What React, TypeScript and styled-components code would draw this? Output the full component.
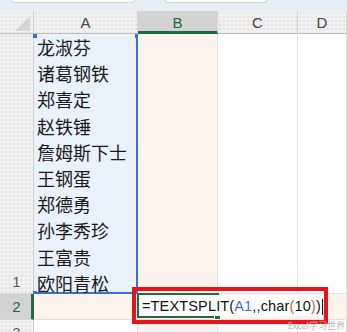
import React from "react";
import styled, { createGlobalStyle, css } from "styled-components";

const Global = createGlobalStyle`
  html, body { margin: 0; padding: 0; background: #ffffff; }
  body { width: 347px; height: 332px; overflow: hidden; font-family: "Liberation Sans", Arial, sans-serif; }
`;

const Page = styled.div`
  position: relative;
  width: 347px;
  height: 332px;
  overflow: hidden;
  display: flex;
  flex-direction: column;
  background: #ffffff;
`;

const TopStrip = styled.div`
  height: 11px;
  flex: none;
  background: #e7edf0;
  display: flex;
  align-items: flex-start;
`;

const Tab = styled.div<{ $left: number; $width: number }>`
  margin-left: ${(p) => p.$left}px;
  width: ${(p) => p.$width}px;
  height: 2px;
  background: #ffffff;
  border: 1px solid #cdd4d8;
  border-top: none;
  border-radius: 0 0 5px 5px;
`;

const Sheet = styled.div`
  flex: 1;
  display: grid;
  grid-template-columns: 34px 104px 80px 80px 1fr;
  grid-template-rows: 23px 260px 26px 1fr;
`;

const headerBg = css`
  background-color: #f1f1f1;
  background-image: radial-gradient(#e3e3e3 0.7px, transparent 0.8px);
  background-size: 4px 4px;
`;

const Corner = styled.div`
  ${headerBg};
  box-sizing: border-box;
  border-right: 1px solid #cfcfcf;
  border-bottom: 1px solid #bfbfbf;
  display: flex;
  align-items: flex-end;
  justify-content: flex-end;
  padding: 0 3px 2px 0;
`;

const Triangle = styled.div`
  width: 0;
  height: 0;
  border-left: 15px solid transparent;
  border-bottom: 15px solid #d6d6d6;
`;

const ColHeader = styled.div<{ $active?: boolean }>`
  ${headerBg};
  ${(p) => p.$active && css`background: #d3d3d3;`}
  box-sizing: border-box;
  border-right: 1px solid #d4d4d4;
  border-bottom: ${(p) => (p.$active ? "3px solid #1d6b3e" : "1px solid #bfbfbf")};
  display: flex;
  align-items: center;
  justify-content: center;
  padding-top: ${(p) => (p.$active ? 3 : 1)}px;
  font-size: 15px;
  color: ${(p) => (p.$active ? "#146c3c" : "#444444")};
`;

const RowHeader = styled.div<{ $active?: boolean }>`
  ${headerBg};
  ${(p) => p.$active && css`background: #d3d3d3;`}
  box-sizing: border-box;
  border-right: ${(p) => (p.$active ? "3px solid #1d6b3e" : "1px solid #cfcfcf")};
  border-bottom: 1px solid #d8d8d8;
  display: flex;
  align-items: flex-end;
  justify-content: center;
  padding-bottom: ${(p) => (p.$active ? 3 : 2)}px;
  padding-left: ${(p) => (p.$active ? 2 : 0)}px;
  font-size: 15px;
  line-height: 18px;
  color: ${(p) => (p.$active ? "#146c3c" : "#5a5a5a")};
`;

const PartialRowHeader = styled(RowHeader)`
  align-items: flex-start;
  padding-top: 5px;
  padding-bottom: 0;
  line-height: 15px;
  overflow: hidden;
`;

type Tone = "plain" | "focus";

const Cell = styled.div<{ $tone?: Tone }>`
  box-sizing: border-box;
  position: relative;
  background: ${(p) => (p.$tone === "focus" ? "#fdf4ee" : "#ffffff")};
  border-right: 1px solid #e0e0e0;
  border-bottom: 1px solid #e0e0e0;
`;

const RangeCell = styled.div`
  box-sizing: border-box;
  position: relative;
  background: #e9f1fb;
  border-right: 2px solid #3d6fd0;
  border-bottom: 2px solid #3d6fd0;
  padding-left: 3px;
`;

const Handle = styled.div<{ $pos: "tl" | "tr" | "bl" | "br" }>`
  position: absolute;
  width: 4px;
  height: 4px;
  background: #3d6fd0;
  ${(p) => (p.$pos === "tl" || p.$pos === "tr" ? "top: 0;" : "bottom: -3px;")}
  ${(p) => (p.$pos === "tl" || p.$pos === "bl" ? "left: -1px;" : "right: -3px;")}
`;

const Names = styled.div`
  font-family: "Noto Sans CJK SC", "Noto Sans CJK JP", sans-serif;
  font-size: 18px;
  line-height: 26.2px;
  color: #1b1b1b;
  white-space: nowrap;
`;

const ActiveFrame = styled.div`
  position: absolute;
  left: -1px;
  top: -1px;
  width: 82px;
  height: 25px;
  box-sizing: border-box;
  border: 2px solid #1d6b3e;
  z-index: 2;
`;

const FillHandle = styled.div`
  position: absolute;
  right: -4px;
  bottom: -4px;
  width: 5px;
  height: 5px;
  background: #1d6b3e;
  border: 1px solid #ffffff;
`;

const Editor = styled.div`
  position: absolute;
  left: 1px;
  top: 1px;
  height: 21px;
  box-sizing: border-box;
  padding: 2px 1px 0 3px;
  background: #ffffff;
  font-family: "Liberation Sans", Arial, sans-serif;
  font-size: 14.5px;
  line-height: 19px;
  letter-spacing: 0.15px;
  color: #111111;
  white-space: nowrap;
  z-index: 3;
`;

const Token = styled.span<{ $kind: "ref" | "paren" }>`
  color: ${(p) => (p.$kind === "ref" ? "#3b6fd6" : "#cf5a35")};
`;

const Caret = styled.span`
  display: inline-block;
  width: 1px;
  height: 16px;
  margin-left: 1px;
  background: #111111;
  vertical-align: -4px;
`;

const Annotation = styled.div`
  position: absolute;
  left: -6px;
  top: -7px;
  width: 196px;
  height: 37px;
  box-sizing: border-box;
  border: 4px solid #e8141c;
  z-index: 4;
`;

const Watermark = styled.div`
  position: absolute;
  right: 2px;
  bottom: 1px;
  font-family: "Noto Sans CJK SC", sans-serif;
  font-size: 9px;
  line-height: 10px;
  color: #b9b9b9;
  white-space: nowrap;
  z-index: 5;
`;

const names = ["龙淑芬", "诸葛钢铁", "郑喜定", "赵铁锤", "詹姆斯下士", "王钢蛋", "郑德勇", "孙李秀珍", "王富贵", "欧阳青松"];

export default function App() {
  return (
    <Page>
      <Global />
      <TopStrip>
        <Tab $left={11} $width={122} />
        <Tab $left={30} $width={100} />
      </TopStrip>
      <Sheet>
        <Corner>
          <Triangle />
        </Corner>
        <ColHeader>A</ColHeader>
        <ColHeader $active>B</ColHeader>
        <ColHeader>C</ColHeader>
        <ColHeader>D</ColHeader>

        <RowHeader>1</RowHeader>
        <RangeCell>
          <Handle $pos="tl" />
          <Handle $pos="tr" />
          <Handle $pos="bl" />
          <Handle $pos="br" />
          <Names>
            {names.map((n) => (
              <div key={n}>{n}</div>
            ))}
          </Names>
        </RangeCell>
        <Cell $tone="focus" />
        <Cell />
        <Cell />

        <RowHeader $active>2</RowHeader>
        <Cell $tone="focus" />
        <Cell $tone="focus">
          <ActiveFrame>
            <FillHandle />
          </ActiveFrame>
          <Editor>
            =TEXTSPLIT(<Token $kind="ref">A1</Token>,,char<Token $kind="paren">(</Token>10
            <Token $kind="paren">)</Token>)
            <Caret />
          </Editor>
          <Annotation />
        </Cell>
        <Cell $tone="focus" />
        <Cell $tone="focus" />

        <PartialRowHeader>3</PartialRowHeader>
        <Cell />
        <Cell $tone="focus" />
        <Cell />
        <Cell />
      </Sheet>
      <Watermark>Excel学习世界</Watermark>
    </Page>
  );
}
